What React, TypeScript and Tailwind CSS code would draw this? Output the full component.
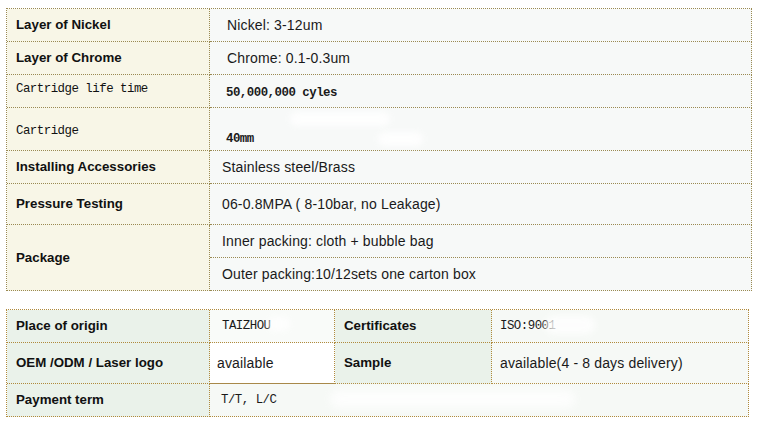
import React from "react";

const arial = { fontFamily: '"Liberation Sans", Arial, sans-serif' };
const mono = { fontFamily: '"Liberation Mono", "Courier New", monospace' };

export default function App() {
  const lb = "border-r border-b border-dotted border-[#9a8a52] bg-[#f8f6e7] flex items-center pl-[9px] text-[13.3px] font-bold text-[#111]";
  const vb = "border-r border-b border-dotted border-[#9a8a52] bg-[#f7f9f8] flex items-center text-[14px] tracking-[0.15px] text-[#1a1a1a]";
  const lb2 = "border-r border-b border-dotted border-[#b08a3c] bg-[#eaf2ea] flex items-center pl-[9px] text-[13.3px] font-bold text-[#111]";
  const vb2 = "border-r border-b border-dotted border-[#b08a3c] bg-[#f6f9f6] flex items-center text-[14px] tracking-[0.15px] text-[#1a1a1a]";
  const m = "text-[12.4px] tracking-[-0.5px]";
  return (
    <div className="w-[761px] h-[425px] bg-white relative overflow-hidden" style={arial}>
      <div className="pt-[8px] pl-[6px]">
        <div className="grid grid-cols-[203px_542px] grid-rows-[33px_33px_33px_43px_33px_41px_33px_33px] w-[746px] border-t border-l border-dotted border-[#9a8a52]">
          <div className={lb}>Layer of Nickel</div>
          <div className={vb + " pl-[17px]"}>Nickel: 3-12um</div>
          <div className={lb}>Layer of Chrome</div>
          <div className={vb + " pl-[17px]"}>Chrome: 0.1-0.3um</div>
          <div className={lb + " font-normal pl-[8px] pb-[4px]"} style={mono}>
            <span className={m + " font-normal"}>Cartridge life time</span>
          </div>
          <div className={vb + " pl-[16px] pt-[4px]"} style={mono}>
            <span className={m + " font-bold"}>50,000,000 cyles</span>
          </div>
          <div className={lb + " pl-[9px] items-start pt-[14px]"} style={mono}>
            <span className={m + " font-normal"}>Cartridge</span>
          </div>
          <div className={vb + " pl-[16px] items-start pt-[22px]"} style={mono}>
            <span className={m + " font-bold"}>40mm</span>
          </div>
          <div className={lb}>Installing Accessories</div>
          <div className={vb + " pl-[12px]"}>Stainless steel/Brass</div>
          <div className={lb}>Pressure Testing</div>
          <div className={vb + " pl-[12px]"}>06-0.8MPA ( 8-10bar, no Leakage)</div>
          <div className={lb + " row-span-2"}>Package</div>
          <div className={vb + " pl-[12px]"}>Inner packing: cloth + bubble bag</div>
          <div className={vb + " pl-[12px]"}>Outer packing:10/12sets one carton box</div>
        </div>
      </div>
      <div className="pt-[18px] pl-[6px]">
        <div className="grid grid-cols-[203px_125px_157px_257px] grid-rows-[33px_41px_33px] w-[743px] border-t border-l border-dotted border-[#b08a3c]">
          <div className={lb2}>Place of origin</div>
          <div className={vb2 + " pl-[12px] bg-[#f9fbf9]"} style={mono}>
            <span className={m}>TAIZHOU</span>
          </div>
          <div className={lb2 + " pl-[4px]"}>Certificates</div>
          <div className={vb2 + " pl-[8px] bg-[#f3f7f3]"} style={mono}>
            <span className={m}>ISO:9001</span>
          </div>
          <div className={lb2}>OEM /ODM / Laser logo</div>
          <div className={vb2 + " pl-[7px] bg-white"} style={{ borderBottomStyle: "solid", borderBottomColor: "#a8894a" }}>available</div>
          <div className={lb2 + " pl-[4px]"}>Sample</div>
          <div className={vb2 + " pl-[8px] bg-[#f3f7f3]"}>available(4 - 8 days delivery)</div>
          <div className={lb2}>Payment term</div>
          <div className={vb2 + " col-span-3 pl-[11px] bg-[#f3f7f3]"} style={mono}>
            <span className={m}>T/T, L/C</span>
          </div>
        </div>
      </div>
      <div className="absolute left-[290px] top-[112px] w-[100px] h-[14px] rounded-full bg-white blur-[3px] opacity-90" />
      <div className="absolute left-[378px] top-[132px] w-[45px] h-[14px] rounded-full bg-white blur-[3px] opacity-90" />
      <div className="absolute left-[268px] top-[317px] w-[22px] h-[14px] rounded-full bg-white blur-[3px] opacity-80" />
      <div className="absolute left-[545px] top-[316px] w-[50px] h-[18px] rounded-full bg-white blur-[3px] opacity-80" />
      <div className="absolute left-[330px] top-[390px] w-[245px] h-[18px] rounded-full bg-white blur-[4px] opacity-80" />
    </div>
  );
}
